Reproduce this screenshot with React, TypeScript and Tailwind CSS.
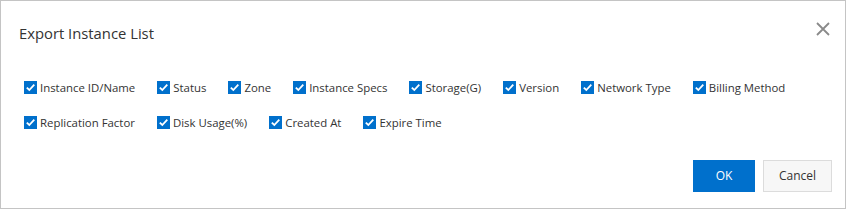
const row1 = [
  "Instance ID/Name",
  "Status",
  "Zone",
  "Instance Specs",
  "Storage(G)",
  "Version",
  "Network Type",
  "Billing Method",
];
const row2 = ["Replication Factor", "Disk Usage(%)", "Created At", "Expire Time"];

function Check({ label }: { label: string }) {
  return (
    <label className="flex items-center mr-[22px] h-[35px]">
      <span className="w-[13px] h-[13px] bg-[#0070cc] flex items-center justify-center mr-[3px]">
        <svg width="11" height="11" viewBox="0 0 11 11" fill="none">
          <path d="M1.8 5.6 L4.3 8 L9.3 2.6" stroke="#fff" strokeWidth="1.8" />
        </svg>
      </span>
      <span className="text-[11.4px] text-[#333]">{label}</span>
    </label>
  );
}

export default function App() {
  return (
    <div
      className="w-[846px] h-[209px] border border-[#c4c4c4] bg-white flex flex-col"
      style={{ fontFamily: '"Open Sans", "Noto Sans", sans-serif' }}
    >
      <div className="flex items-center justify-between pl-[18px] pr-[14px] pt-[22px]">
        <h2 className="text-[14.8px] text-[#333] leading-[20px]">Export Instance List</h2>
        <svg width="16" height="16" viewBox="0 0 16 16" className="-mt-[8px]">
          <path d="M2 2 L14 14 M14 2 L2 14" stroke="#8a8a8a" strokeWidth="1.8" />
        </svg>
      </div>
      <div className="pl-[23px] pt-[27px] flex flex-col">
        <div className="flex">
          {row1.map((l) => (
            <Check key={l} label={l} />
          ))}
        </div>
        <div className="flex">
          {row2.map((l) => (
            <Check key={l} label={l} />
          ))}
        </div>
      </div>
      <div className="flex justify-end gap-[8px] pr-[13px] mt-auto pb-[16px]">
        <button className="w-[62px] h-[32px] bg-[#0070cc] text-white text-[12px]">OK</button>
        <button className="w-[69px] h-[32px] bg-[#f7f7f7] border border-[#dcdcdc] text-[#333] text-[12px]">
          Cancel
        </button>
      </div>
    </div>
  );
}
